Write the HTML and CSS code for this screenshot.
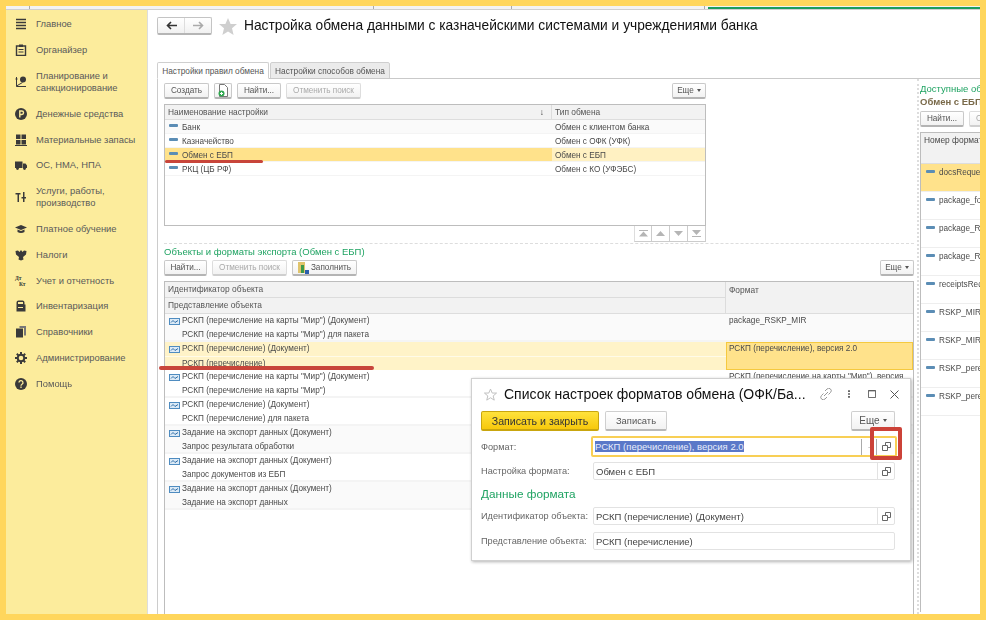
FILE: index.html
```html
<!DOCTYPE html>
<html lang="ru">
<head>
<meta charset="utf-8">
<title>Настройка обмена</title>
<link rel="stylesheet" href="styles.css">
</head>
<body>
<svg class="defs" width="0" height="0" aria-hidden="true">
  <symbol id="dash" viewBox="0 0 9 3"><rect width="9" height="3" rx="1" fill="#5b8db5"/></symbol>
  <symbol id="doc" viewBox="0 0 11 7"><rect x=".5" y=".5" width="10" height="6" fill="#dceaf6" stroke="#4f8cc0"/><path d="M2 4.500l2-2 2 2 3-2" fill="none" stroke="#2f6ea8"/></symbol>
  <symbol id="copy" viewBox="0 0 9 9"><path d="M3.500 3V.5h5v5H6M.5 3.500h5v5h-5z" fill="none" stroke="#666"/></symbol>
</svg>
<div class="frame">
  <div class="topstrip">
    <span class="seg s1"></span><span class="seg s2"></span><span class="seg s3"></span><span class="seg s4"></span>
    <span class="seg s5"><i class="topgreen"></i></span>
  </div>
  <div class="app">
    <nav class="sidebar">
      <div class="navitem"><svg class="navicon" viewBox="0 0 12 12"><path d="M1 1.500h10M1 4.500h10M1 7.500h10M1 10.500h10" stroke="#3a3a3a" stroke-width="1.500"/></svg><span>Главное</span></div>
      <div class="navitem"><svg class="navicon" viewBox="0 0 12 12"><path d="M1.500 2h9v9.500h-9z" fill="#fcec9c" stroke="#3a3a3a" stroke-width="1.400"/><path d="M4 .5h4v2.500H4z" fill="#3a3a3a"/><path d="M3.500 5.500h5M3.500 8h5" stroke="#3a3a3a"/></svg><span>Органайзер</span></div>
      <div class="navitem tall"><svg class="navicon" viewBox="0 0 12 12"><circle cx="8" cy="3.500" r="3" fill="#3a3a3a"/><path d="M1.500 1v9.500H11M1.500 10l6-3.500" fill="none" stroke="#3a3a3a"/><circle cx="1.500" cy="3" r="1" fill="#3a3a3a"/></svg><span>Планирование и<br>санкционирование</span></div>
      <div class="navitem"><svg class="navicon" viewBox="0 0 12 12"><circle cx="6" cy="6" r="6" fill="#3a3a3a"/><path d="M4.800 9.500v-6.500h2a1.600 1.600 0 0 1 0 3.500h-2" fill="none" stroke="#fcec9c" stroke-width="1.400"/></svg><span>Денежные средства</span></div>
      <div class="navitem"><svg class="navicon" viewBox="0 0 12 12"><path d="M1 .5h4.500v4.500H1zM6.500 .5H11v4.500H6.500zM1 6h4.500v4.500H1zM6.500 6H11v4.500H6.500zM0 11h12v1H0z" fill="#3a3a3a"/></svg><span>Материальные запасы</span></div>
      <div class="navitem"><svg class="navicon" viewBox="0 0 12 12"><path d="M0 2.500h7.500v6.500H0zM8 4.500h2.500L12 6.500V9H8z" fill="#3a3a3a"/><circle cx="2.500" cy="9.500" r="1.400" fill="#3a3a3a"/><circle cx="9.500" cy="9.500" r="1.400" fill="#3a3a3a"/></svg><span>ОС, НМА, НПА</span></div>
      <div class="navitem tall"><svg class="navicon" viewBox="0 0 12 12"><path d="M.5 2h5v1.500H4V11H2.500V3.500h-2zM8 1h1.500v5H11v1.500H9.500V11H8V7.500H6.500V6H8z" fill="#3a3a3a"/></svg><span>Услуги, работы,<br>производство</span></div>
      <div class="navitem"><svg class="navicon" viewBox="0 0 12 12"><path d="M6 2l6 2.500L6 7 0 4.500z" fill="#3a3a3a"/><path d="M2.500 6.500v2.500c2 1.300 5 1.300 7 0V6.500L6 8z" fill="#3a3a3a"/></svg><span>Платное обучение</span></div>
      <div class="navitem"><svg class="navicon" viewBox="0 0 12 12"><path d="M6 1l1.500 2L9 1.500l2.500.5-.5 3.500L8 8l.5 2.500L6 11.500 3.500 10.500 4 8 1 5.500.5 2 3 1.500 4.500 3z" fill="#3a3a3a"/></svg><span>Налоги</span></div>
      <div class="navitem"><span class="dtkt">Дт<br><i>Кт</i></span><span>Учет и отчетность</span></div>
      <div class="navitem"><svg class="navicon" viewBox="0 0 12 12"><path d="M1.500 4.500V2.500A2 2 0 0 1 3.500 .5h4a2 2 0 0 1 2 2v2h1V11.500h-9z" fill="#3a3a3a"/><rect x="3" y="2" width="5" height="2" fill="#fcec9c"/><rect x="3" y="7" width="5" height="1" fill="#fcec9c"/></svg><span>Инвентаризация</span></div>
      <div class="navitem"><svg class="navicon" viewBox="0 0 12 12"><path d="M4.500 0H11v9.500H9V2H4.500z" fill="#777"/><path d="M1 2.500h7v9H1z" fill="#3a3a3a"/></svg><span>Справочники</span></div>
      <div class="navitem"><svg class="navicon" viewBox="0 0 12 12"><circle cx="6" cy="6" r="3.300" fill="none" stroke="#3a3a3a" stroke-width="2"/><path d="M6 0v2.500M6 9.500V12M0 6h2.500M9.500 6H12M1.800 1.800l1.800 1.800M8.400 8.400l1.800 1.800M10.200 1.800L8.400 3.600M3.600 8.400l-1.800 1.800" stroke="#3a3a3a" stroke-width="2"/></svg><span>Администрирование</span></div>
      <div class="navitem"><svg class="navicon" viewBox="0 0 12 12"><circle cx="6" cy="6" r="6" fill="#3a3a3a"/><path d="M4 4.600a2 1.900 0 1 1 3 1.600c-.7.4-1 .7-1 1.500" fill="none" stroke="#fcec9c" stroke-width="1.300"/><rect x="5.300" y="8.500" width="1.400" height="1.400" fill="#fcec9c"/></svg><span>Помощь</span></div>
    </nav>

    <main class="main">
      <header class="head">
        <div class="navbtns">
          <span class="navbtn"><svg width="11" height="9" viewBox="0 0 11 9"><path d="M11 4.500H2M5 1L1.500 4.500 5 8" fill="none" stroke="#333" stroke-width="1.600"/></svg></span>
          <span class="navbtn"><svg width="11" height="9" viewBox="0 0 11 9"><path d="M0 4.500h9M6 1l3.500 3.500L6 8" fill="none" stroke="#aaa" stroke-width="1.600"/></svg></span>
        </div>
        <svg class="bigstar" viewBox="0 0 18 17"><path d="M9 0l2.600 6H18l-5 4.300L14.600 17 9 13.400 3.400 17 5 10.300 0 6h6.400z" fill="#cfcfcf"/></svg>
        <h1 class="title">Настройка обмена данными с казначейскими системами и учреждениями банка</h1>
      </header>

      <div class="tabs">
        <span class="tab active">Настройки правил обмена</span>
        <span class="tab">Настройки способов обмена</span>
      </div>

      <div class="panel">
        <section class="leftcol">
          <div class="upper">
            <div class="toolbar">
              <span class="btn w45">Создать</span>
              <span class="btn w18 iconbtn"><svg width="11" height="13" viewBox="0 0 11 13"><path d="M1.500 .5h5l3 3v9h-8z" fill="#fff" stroke="#777"/><circle cx="3.500" cy="9.500" r="3" fill="#2fa84f"/><path d="M3.500 8v3M2 9.500h3" stroke="#fff"/></svg></span>
              <span class="btn w44">Найти...</span>
              <span class="btn w75 off">Отменить поиск</span>
              <span class="btn w34 push">Еще <i class="caret"></i></span>
            </div>
            <div class="table t1">
              <div class="t1head">
                <span class="hcell">Наименование настройки<b class="sort">↓</b></span>
                <span class="hcell">Тип обмена</span>
              </div>
              <div class="t1row alt"><span class="cell"><svg class="rowdash"><use href="#dash"/></svg>Банк</span><span class="cell sec">Обмен с клиентом банка</span></div>
              <div class="t1row"><span class="cell"><svg class="rowdash"><use href="#dash"/></svg>Казначейство</span><span class="cell sec">Обмен с ОФК (УФК)</span></div>
              <div class="t1row cur"><span class="cell"><svg class="rowdash"><use href="#dash"/></svg>Обмен с ЕБП</span><span class="cell sec">Обмен с ЕБП</span></div>
              <div class="t1row"><span class="cell"><svg class="rowdash"><use href="#dash"/></svg>РКЦ (ЦБ РФ)</span><span class="cell sec">Обмен с КО (УФЭБС)</span></div>
            </div>
            <div class="pager">
              <span class="pg"><svg width="9" height="7" viewBox="0 0 9 7"><path d="M0 0h9v1H0zM4.500 1.500L9 6.500H0z" fill="#b5b5b5"/></svg></span>
              <span class="pg"><svg width="9" height="5" viewBox="0 0 9 5"><path d="M4.500 0L9 5H0z" fill="#b5b5b5"/></svg></span>
              <span class="pg"><svg width="9" height="5" viewBox="0 0 9 5"><path d="M0 0h9L4.500 5z" fill="#b5b5b5"/></svg></span>
              <span class="pg"><svg width="9" height="7" viewBox="0 0 9 7"><path d="M0 0h9L4.500 5zM0 6h9v1H0z" fill="#b5b5b5"/></svg></span>
            </div>
          </div>
          <h2 class="green">Объекты и форматы экспорта (Обмен с ЕБП)</h2>
          <div class="toolbar second">
            <span class="btn w43">Найти...</span>
            <span class="btn w75 off">Отменить поиск</span>
            <span class="btn w65 fill"><svg width="11" height="12" viewBox="0 0 11 12"><path d="M0 0h7v11H0z" fill="#e0c46c"/><path d="M3 3h3v8H3z" fill="#3d9a4a"/><path d="M7 8h4v4H7z" fill="#2b5fae"/></svg>Заполнить</span>
            <span class="btn w34 push">Еще <i class="caret"></i></span>
          </div>
          <div class="table t2">
            <div class="t2head">
              <div class="hstack"><span class="hcell h1">Идентификатор объекта</span><span class="hcell h2">Представление объекта</span></div>
              <span class="hcell">Формат</span>
            </div>
            <div class="t2row alt"><div class="lines"><span class="line"><svg class="rowdoc"><use href="#doc"/></svg>РСКП (перечисление на карты "Мир") (Документ)</span><span class="line sub">РСКП (перечисление на карты "Мир") для пакета</span></div><span class="fmt">package_RSKP_MIR</span></div>
            <div class="t2row sel"><div class="lines"><span class="line"><svg class="rowdoc"><use href="#doc"/></svg>РСКП (перечисление) (Документ)</span><span class="line sub">РСКП (перечисление)</span></div><span class="fmt">РСКП (перечисление), версия 2.0</span></div>
            <div class="t2row"><div class="lines"><span class="line"><svg class="rowdoc"><use href="#doc"/></svg>РСКП (перечисление на карты "Мир") (Документ)</span><span class="line sub">РСКП (перечисление на карты "Мир")</span></div><span class="fmt">РСКП (перечисление на карты "Мир"), версия</span></div>
            <div class="t2row"><div class="lines"><span class="line"><svg class="rowdoc"><use href="#doc"/></svg>РСКП (перечисление) (Документ)</span><span class="line sub">РСКП (перечисление) для пакета</span></div><span class="fmt"></span></div>
            <div class="t2row alt"><div class="lines"><span class="line"><svg class="rowdoc"><use href="#doc"/></svg>Задание на экспорт данных (Документ)</span><span class="line sub">Запрос результата обработки</span></div><span class="fmt"></span></div>
            <div class="t2row"><div class="lines"><span class="line"><svg class="rowdoc"><use href="#doc"/></svg>Задание на экспорт данных (Документ)</span><span class="line sub">Запрос документов из ЕБП</span></div><span class="fmt"></span></div>
            <div class="t2row alt"><div class="lines"><span class="line"><svg class="rowdoc"><use href="#doc"/></svg>Задание на экспорт данных (Документ)</span><span class="line sub">Задание на экспорт данных</span></div><span class="fmt"></span></div>
          </div>
        </section>

        <aside class="rightcol">
          <h2 class="green rgreen">Доступные об</h2>
          <div class="rsub">Обмен с ЕБП</div>
          <div class="toolbar rtools"><span class="btn w44">Найти...</span><span class="btn w75 off">Отменить поиск</span></div>
          <div class="rtable">
            <div class="rhead">Номер формат</div>
            <div class="rrow cur"><svg class="rowdash"><use href="#dash"/></svg>docsRequest</div>
            <div class="rrow"><svg class="rowdash"><use href="#dash"/></svg>package_fo</div>
            <div class="rrow"><svg class="rowdash"><use href="#dash"/></svg>package_R</div>
            <div class="rrow"><svg class="rowdash"><use href="#dash"/></svg>package_R</div>
            <div class="rrow"><svg class="rowdash"><use href="#dash"/></svg>receiptsReq</div>
            <div class="rrow"><svg class="rowdash"><use href="#dash"/></svg>RSKP_MIR</div>
            <div class="rrow"><svg class="rowdash"><use href="#dash"/></svg>RSKP_MIR</div>
            <div class="rrow"><svg class="rowdash"><use href="#dash"/></svg>RSKP_pere</div>
            <div class="rrow"><svg class="rowdash"><use href="#dash"/></svg>RSKP_pere</div>
          </div>
        </aside>
      </div>
    </main>
  </div>

  <span class="underline ul1"></span>
  <span class="underline ul2"></span>

  <div class="modal">
    <div class="mhead">
      <svg class="mstar" viewBox="0 0 18 17"><path d="M9 1l2.400 5.500h6l-4.700 4 1.500 5.800L9 13l-5.200 3.300 1.500-5.800-4.700-4h6z" fill="none" stroke="#bdbdbd" stroke-width="1.300"/></svg>
      <span class="mtitle">Список настроек форматов обмена (ОФК/Ба...</span>
      <svg class="mico link" viewBox="0 0 12 12"><path d="M5 3l2-2a2.300 2.300 0 0 1 3.500 3.500l-2 2M7 9l-2 2A2.300 2.300 0 0 1 1.500 7.500l2-2M4 8l4-4" fill="none" stroke="#999"/></svg>
      <svg class="mico dots" viewBox="0 0 3 11"><path d="M0 0h3v2.500H0zM0 4.250h3v2.500H0zM0 8.500h3V11H0z" fill="#666"/></svg>
      <svg class="mico sq" viewBox="0 0 9 9"><path d="M.5 .5h8v8h-8z" fill="none" stroke="#555"/><path d="M.5 1h8" stroke="#555"/></svg>
      <svg class="mico xx" viewBox="0 0 9 9"><path d="M.5 .5l8 8M8.500 .5l-8 8" stroke="#555"/></svg>
    </div>
    <div class="mtools">
      <span class="mbtn primary">Записать и закрыть</span>
      <span class="mbtn plain">Записать</span>
      <span class="mbtn more">Еще <i class="caret"></i></span>
    </div>
    <div class="mform">
      <label class="flabel">Формат:</label>
      <div class="field focus"><span class="ftext"><mark class="picked">РСКП (перечисление), версия 2.0</mark></span><span class="fsep"></span><span class="fdots">·</span><span class="fbtn"><svg width="9" height="9"><use href="#copy"/></svg></span></div>
      <label class="flabel">Настройка формата:</label>
      <div class="field"><span class="ftext">Обмен с ЕБП</span><span class="fbtn"><svg width="9" height="9"><use href="#copy"/></svg></span></div>
      <h3 class="mgreen">Данные формата</h3>
      <label class="flabel">Идентификатор объекта:</label>
      <div class="field"><span class="ftext">РСКП (перечисление) (Документ)</span><span class="fbtn"><svg width="9" height="9"><use href="#copy"/></svg></span></div>
      <label class="flabel low">Представление объекта:</label>
      <div class="field low"><span class="ftext">РСКП (перечисление)</span></div>
    </div>
    <span class="redbox"></span>
  </div>
</div>
</body>
</html>
```

FILE: styles.css
```css
* { box-sizing: border-box; }
html, body { margin: 0; padding: 0; height: 100%; overflow: hidden; background: #fff; }
body { font-family: "Liberation Sans", Arial, sans-serif; font-size: 8.2px; color: #4a4a4a; }
.defs { position: absolute; }

.frame { position: relative; width: 986px; height: 620px; border: 6px solid #ffd65c; display: flex; flex-direction: column; overflow: hidden; filter: blur(.25px); }
.topstrip { height: 4px; flex: none; background: #f3f3f3; border-bottom: 1px solid #d0d0d0; display: flex; }
.seg { height: 3px; border-right: 1px solid #aaa; flex: none; }
.s1 { width: 24px; } .s2 { width: 344px; } .s3 { width: 138px; } .s4 { width: 193px; }
.s5 { flex: 1; border-right: 0; padding: 1px 0 0 3px; }
.topgreen { display: block; height: 2px; background: #1c9c5e; }
.app { flex: 1; min-height: 0; display: flex; }

.sidebar { width: 142px; flex: none; background: #fcec9c; padding-top: 1.5px; border-right: 1px solid #ddd; }
.navitem { height: 25.8px; display: flex; align-items: center; padding-left: 9px; gap: 9px; font-size: 9.4px; line-height: 12px; color: #5a5a5a; }
.navitem.tall { height: 37.8px; }
.navicon { width: 12px; height: 12px; flex: none; }
.dtkt { width: 12px; flex: none; font: bold 5.5px/6px "Liberation Serif", serif; color: #333; }
.dtkt i { font-style: normal; padding-left: 4px; }

.main { flex: 1; min-width: 0; padding: 7px 0 0 9px; display: flex; flex-direction: column; }
.head { display: flex; align-items: center; height: 18px; flex: none; }
.navbtns { display: flex; width: 55px; height: 18px; border: 1px solid #c4c4c4; border-bottom: 2px solid #b5b5b5; border-radius: 2px; background: linear-gradient(#fff, #f1f1f1); }
.navbtn { flex: 1; display: flex; align-items: center; justify-content: center; }
.navbtn + .navbtn { border-left: 1px solid #ddd; }
.bigstar { width: 18px; height: 17px; margin-left: 7px; }
.title { margin: 0 0 0 7px; font-size: 13.75px; font-weight: 400; color: #111; white-space: nowrap; line-height: 18px; }

.tabs { display: flex; margin-top: 27px; height: 17px; flex: none; }
.tab { display: flex; align-items: center; justify-content: center; height: 17px; width: 120px; margin-left: 1px; background: #ebebeb; border: 1px solid #cfcfcf; border-radius: 2px 2px 0 0; font-size: 8.3px; color: #555; }
.tab.active { width: 112px; margin-left: 0; background: #fff; border-bottom-color: #fff; position: relative; z-index: 1; }

.panel { flex: 1; min-height: 0; margin-top: -1px; border-left: 1px solid #ccc; border-top: 1px solid #c9c9c9; display: flex; padding-left: 6px; }
.leftcol { width: 755px; flex: none; padding: 4px 5px 0 0; border-right: 2px dotted #ddd; }
.upper { border-bottom: 1px dashed #ddd; width: 750px; height: 161px; }
.toolbar { display: flex; gap: 5px; height: 16px; width: 542px; align-items: flex-start; }
.btn { display: flex; align-items: center; justify-content: center; height: 16px; border: 1px solid #c9c9c9; border-bottom: 2px solid #b4b4b4; border-radius: 2px; background: linear-gradient(#fff, #f2f2f2); font-size: 8.2px; color: #555; white-space: nowrap; flex: none; }
.btn.off { color: #aaa; border-color: #ddd; border-bottom-color: #cfcfcf; }
.w18 { width: 18px; } .w34 { width: 34px; } .w43 { width: 43px; } .w44 { width: 44px; } .w45 { width: 45px; } .w65 { width: 65px; } .w75 { width: 75px; }
.fill { gap: 2px; }
.push { margin-left: auto; }
.caret { display: inline-block; width: 0; height: 0; margin-left: 3px; border: 2.5px solid transparent; border-top: 3px solid #555; border-bottom: 0; }

.table { border: 1px solid #bdbdbd; background: #fff; }
.t1 { width: 542px; height: 122px; margin-top: 5px; overflow: hidden; }
.t1head, .t1row { display: grid; grid-template-columns: 387px 1fr; }
.t1head { height: 15px; background: #f2f2f2; border-bottom: 1px solid #ddd; }
.hcell { display: flex; align-items: center; justify-content: space-between; padding: 0 7px 0 3px; font-size: 8.4px; color: #555; border-right: 1px solid #dcdcdc; }
.hcell:last-child { border-right: 0; }
.sort { font-weight: 400; color: #333; }
.t1row { height: 14px; align-items: stretch; border-bottom: 1px solid #f4f4f4; }
.t1row.alt { background: #fafafa; }
.t1row.cur .cell { background: #ffe28b; }
.t1row.cur .cell.sec { background: #fff1c2; }
.cell { display: flex; align-items: center; padding: 1px 0 0 4px; font-size: 8.2px; white-space: nowrap; }
.cell.sec { padding-left: 3px; }
.rowdash { width: 9px; height: 3px; margin-right: 4px; position: relative; top: -2px; flex: none; }
.pager { display: flex; justify-content: flex-end; width: 542px; }
.pg { width: 18px; height: 16px; display: flex; align-items: center; justify-content: center; border: 1px solid #ccc; border-top: 0; border-left-color: #ddd; }
.pg + .pg { border-left: 0; }

.green { margin: 2px 0 0; height: 12px; line-height: 12px; font-size: 9.5px; font-weight: 400; color: #1fa362; white-space: nowrap; }
.toolbar.second { width: 750px; margin-top: 2px; }
.t2 { width: 750px; height: 340px; margin-top: 5px; overflow: hidden; }
.t2head { display: grid; grid-template-columns: 561px 1fr; height: 32px; background: #f2f2f2; border-bottom: 1px solid #ddd; }
.t2head > .hcell { align-items: flex-start; padding-top: 3px; }
.hstack { display: flex; flex-direction: column; border-right: 1px solid #dcdcdc; }
.h1, .h2 { height: 15.5px; border-right: 0; }
.h1 { border-bottom: 1px solid #dcdcdc; }
.t2row { display: grid; grid-template-columns: 561px 1fr; height: 28px; border-bottom: 2px solid #f4f4f4; }
.t2row.alt { background: #fafafa; }
.lines { display: flex; flex-direction: column; }
.line { height: 14px; line-height: 14px; display: flex; align-items: center; padding-left: 4px; white-space: nowrap; font-size: 8.2px; }
.line.sub { padding-left: 17px; }
.rowdoc { width: 11px; height: 7px; margin-right: 2px; flex: none; }
.fmt { padding: 1px 0 0 3px; line-height: 12px; white-space: nowrap; font-size: 8.2px; }
.t2row.sel .lines { background: #fff3c8; }
.t2row.sel .line.sub { border-top: 1px solid #fffbe8; }
.t2row.sel .fmt { background: #ffe28b; border: 1px solid #f5c93f; padding: 0 0 0 2px; }

.rightcol { width: 61px; flex: none; padding: 4px 0 0 1px; overflow: hidden; white-space: nowrap; }
.rgreen { margin: 0; }
.rsub { height: 13px; line-height: 14px; font-size: 9.5px; font-weight: 700; color: #7a6a4a; }
.rtools { margin-top: 3px; width: 130px; }
.rtable { margin-top: 5px; border: solid #bdbdbd; border-width: 1px 0 0 1px; height: 480px; overflow: hidden; width: 70px; }
.rhead { height: 31px; padding: 2px 0 0 3px; background: #f2f2f2; border-bottom: 1px solid #ddd; font-size: 8.4px; }
.rrow { height: 28px; padding: 3px 0 0 5px; font-size: 8.2px; line-height: 12px; border-bottom: 1px solid #eee; display: flex; align-items: flex-start; }
.rrow .rowdash { top: 3px; }
.rrow.cur { background: #ffe28b; }

.underline { position: absolute; background: #c8453a; border-radius: 2px; }
.ul1 { left: 159px; top: 154px; width: 98px; height: 3px; }
.ul2 { left: 153px; top: 360px; width: 215px; height: 4px; }

.modal { position: absolute; left: 465px; top: 372px; width: 440px; height: 183px; background: #fff; border: 1px solid #d0d0d0; box-shadow: 1px 1px 3px rgba(0,0,0,.3); padding: 0 15px 0 9px; }
.mhead { display: flex; align-items: center; height: 30px; padding-left: 3px; }
.mstar { width: 13px; height: 13px; flex: none; }
.mtitle { margin-left: 7px; width: 302px; font-size: 14px; color: #111; white-space: nowrap; }
.mico { flex: none; }
.link { width: 12px; height: 12px; margin-left: 14px; }
.dots { width: 2px; height: 8px; margin-left: 16px; }
.sq { width: 8px; height: 8px; margin-left: 18px; }
.xx { width: 9px; height: 9px; margin-left: 14px; }
.mtools { display: flex; gap: 6px; height: 20px; margin-top: 2px; }
.mbtn { display: flex; align-items: center; justify-content: center; height: 20px; font-size: 9.4px; border-radius: 2px; border: 1px solid #cfcfcf; border-bottom: 2px solid #b8b8b8; background: linear-gradient(#fff, #f2f2f2); color: #555; }
.primary { width: 118px; font-size: 10.6px; background: linear-gradient(#ffe23c, #f7c90c); border-color: #c9a60e; color: #333; }
.plain { width: 62px; }
.more { width: 44px; margin-left: auto; font-size: 10px; }
.mform { display: grid; grid-template-columns: 112px 302px; align-items: center; margin-top: 5px; row-gap: 5px; position: relative; }
.flabel { font-size: 9.2px; color: #666; white-space: nowrap; }
.field { height: 18px; display: flex; align-items: center; border: 1px solid #e2e2e2; border-radius: 2px; font-size: 9.5px; color: #444; }
.low { margin-top: 2px; }
.ftext { flex: 1; padding-left: 2px; white-space: nowrap; overflow: hidden; }
.fbtn { width: 17px; height: 100%; display: flex; align-items: center; justify-content: center; border-left: 1px solid #e2e2e2; flex: none; }
.field.focus { height: 21px; margin: 0 -2px; border: 2px solid #f8cf55; }
.field.focus .fbtn { border-left: 1px solid #aaa; height: 16px; width: 19px; }
.fsep { width: 1px; height: 16px; background: #aaa; flex: none; }
.fdots { width: 14px; text-align: center; color: #aaa; flex: none; }
.picked { background: #5a78c8; color: #e8edfb; }
.mgreen { grid-column: 1 / -1; margin: 2px 0 1px; height: 14px; line-height: 14px; font-size: 11.75px; font-weight: 400; color: #1fa362; }
.redbox { position: absolute; left: 398px; top: 48px; width: 32px; height: 33px; border: 4px solid #cc4238; border-radius: 2px; }
```
